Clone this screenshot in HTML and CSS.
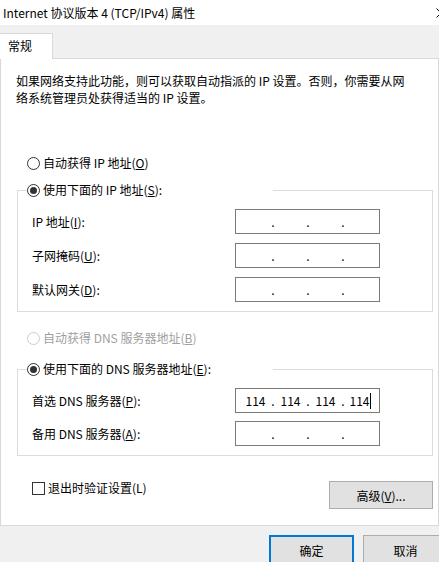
FILE: index.html
```html
<!DOCTYPE html>
<html lang="zh-CN">
<head>
    <meta charset="UTF-8">
    <meta name="viewport" content="width=device-width, initial-scale=1.0">
    <title>Internet 协议版本 4 (TCP/IPv4) 属性</title>
    <link rel="stylesheet" href="styles.css">
</head>
<body>
    <div class="titlebar">
        <span class="title-text">Internet 协议版本 4 (TCP/IPv4) 属性</span>
        <svg class="close-icon" width="10" height="10" viewBox="0 0 10 10">
            <path d="M0.5 0.5 L9.5 9.5 M9.5 0.5 L0.5 9.5" stroke="#000" stroke-width="1" fill="none"/>
        </svg>
    </div>

    <div class="tabstrip">
        <div class="tab">常规</div>
        <div class="tab-fill"></div>
    </div>

    <div class="panel">
        <p class="intro">如果网络支持此功能，则可以获取自动指派的 IP 设置。否则，你需要从网络系统管理员处获得适当的 IP 设置。</p>

        <div class="option first-option">
            <span class="radio"></span>
            <span>自动获得 IP 地址(<u>O</u>)</span>
        </div>

        <fieldset class="group ip-group">
            <legend class="group-head">
                <span class="radio checked"></span>
                <span>使用下面的 IP 地址(<u>S</u>):</span>
            </legend>
            <div class="field-row">
                <span class="field-label">IP 地址(<u>I</u>):</span>
                <div class="ip-box"><span class="octet"></span><span class="dot">.</span><span class="octet"></span><span class="dot">.</span><span class="octet"></span><span class="dot">.</span><span class="octet"></span></div>
            </div>
            <div class="field-row">
                <span class="field-label">子网掩码(<u>U</u>):</span>
                <div class="ip-box"><span class="octet"></span><span class="dot">.</span><span class="octet"></span><span class="dot">.</span><span class="octet"></span><span class="dot">.</span><span class="octet"></span></div>
            </div>
            <div class="field-row">
                <span class="field-label">默认网关(<u>D</u>):</span>
                <div class="ip-box"><span class="octet"></span><span class="dot">.</span><span class="octet"></span><span class="dot">.</span><span class="octet"></span><span class="dot">.</span><span class="octet"></span></div>
            </div>
        </fieldset>

        <div class="option dns-auto disabled">
            <span class="radio"></span>
            <span>自动获得 DNS 服务器地址(<u>B</u>)</span>
        </div>

        <fieldset class="group dns-group">
            <legend class="group-head">
                <span class="radio checked"></span>
                <span>使用下面的 DNS 服务器地址(<u>E</u>):</span>
            </legend>
            <div class="field-row">
                <span class="field-label">首选 DNS 服务器(<u>P</u>):</span>
                <div class="ip-box"><span class="octet">114</span><span class="dot">.</span><span class="octet">114</span><span class="dot">.</span><span class="octet">114</span><span class="dot">.</span><span class="octet">114<span class="caret"></span></span></div>
            </div>
            <div class="field-row">
                <span class="field-label">备用 DNS 服务器(<u>A</u>):</span>
                <div class="ip-box"><span class="octet"></span><span class="dot">.</span><span class="octet"></span><span class="dot">.</span><span class="octet"></span><span class="dot">.</span><span class="octet"></span></div>
            </div>
        </fieldset>

        <div class="bottom-row">
            <div class="check-option">
                <span class="checkbox"></span>
                <span>退出时验证设置(L)</span>
            </div>
            <button class="btn advanced">高级(<u>V</u>)...</button>
        </div>
    </div>

    <div class="footer">
        <button class="btn dialog-btn default">确定</button>
        <button class="btn dialog-btn">取消</button>
    </div>
</body>
</html>
```

FILE: styles.css
```css
body {
    margin: 0;
    width: 439px;
    height: 562px;
    overflow: hidden;
    background-color: #f0f0f0;
    font-family: "Noto Sans CJK SC", "Noto Sans", sans-serif;
    font-size: 12px;
    color: #000;
}
u {
    text-decoration: underline;
    text-underline-offset: 1px;
}
.titlebar {
    height: 25px;
    display: flex;
    align-items: center;
    padding-left: 3px;
    background-color: #fff;
    overflow: hidden;
}
.title-text {
    line-height: 25px;
}
.close-icon {
    margin-left: auto;
    margin-right: -7px;
}
.tabstrip {
    height: 34px;
    display: flex;
    align-items: flex-end;
}
.tab {
    box-sizing: border-box;
    width: 53px;
    height: 26px;
    padding-left: 8px;
    line-height: 24px;
    background-color: #fff;
    border-top: 1px solid #d9d9d9;
    border-right: 1px solid #d9d9d9;
}
.tab-fill {
    flex: 1;
    border-bottom: 1px solid #d9d9d9;
}
.panel {
    box-sizing: border-box;
    height: 467px;
    background-color: #fff;
    border: 1px solid #d9d9d9;
    border-top: none;
    overflow: hidden;
}
.intro {
    width: 394px;
    margin: 13px 0 0 15px;
    line-height: 17px;
}
.option, .group-head, .check-option {
    display: flex;
    align-items: center;
    gap: 3px;
    height: 20px;
    line-height: 20px;
}
.first-option {
    margin: 47px 0 0 26px;
}
.dns-auto {
    margin: 16px 0 0 26px;
}
.disabled {
    color: #a0a0a0;
}
.radio {
    box-sizing: border-box;
    width: 13px;
    height: 13px;
    border: 1px solid #333;
    border-radius: 50%;
    display: flex;
    align-items: center;
    justify-content: center;
    background-color: #fff;
}
.disabled .radio {
    border-color: #ccc;
}
.radio.checked::after {
    content: "";
    width: 7px;
    height: 7px;
    border-radius: 50%;
    background-color: #333;
}
.group {
    width: 416px;
    box-sizing: border-box;
    margin: 7px 0 0 16px;
    padding: 9px 0 9px 9px;
    border: 1px solid #dcdcdc;
    min-inline-size: 0;
}
.dns-group {
    margin-top: 11px;
}
.group-head {
    width: 246px;
    padding: 0;
    background-color: #fff;
}
.field-row {
    display: grid;
    grid-template-columns: 203px 145px;
    height: 25px;
    line-height: 25px;
    padding-left: 5px;
    margin-bottom: 9px;
}
.dns-group .field-row {
    margin-bottom: 8px;
}
.field-row:last-child {
    margin-bottom: 0;
}
.ip-box {
    box-sizing: border-box;
    height: 25px;
    display: flex;
    padding-left: 4px;
    border: 1px solid #7a7a7a;
    line-height: 23px;
}
.octet {
    width: 31px;
    text-align: center;
}
.dot {
    width: 4px;
    text-align: center;
}
.caret {
    display: inline-block;
    width: 1px;
    height: 16px;
    margin-left: 1px;
    vertical-align: -3px;
    background-color: #000;
}
.bottom-row {
    display: flex;
    justify-content: space-between;
    align-items: flex-start;
    margin-top: 25px;
    padding: 0 5px 0 31px;
}
.check-option {
    height: 14px;
    line-height: 14px;
}
.checkbox {
    box-sizing: border-box;
    width: 13px;
    height: 13px;
    border: 1px solid #333;
    background-color: #fff;
}
.btn {
    box-sizing: border-box;
    font-family: inherit;
    font-size: 12px;
    color: #000;
    background-color: #e1e1e1;
    border: 1px solid #adadad;
    padding: 0;
}
.advanced {
    width: 104px;
    height: 28px;
}
.footer {
    display: flex;
    gap: 9px;
    padding: 9px 0 0 269px;
}
.dialog-btn {
    flex: none;
    width: 85px;
    height: 30px;
}
.default {
    border: 2px solid #0078d7;
}
```
